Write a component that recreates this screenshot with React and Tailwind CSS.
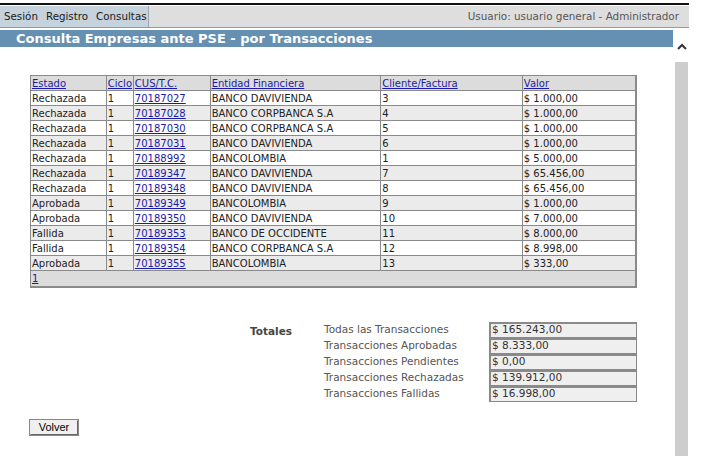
import React from "react";

const rows = [
  ["Rechazada", "1", "70187027", "BANCO DAVIVIENDA", "3", "$ 1.000,00"],
  ["Rechazada", "1", "70187028", "BANCO CORPBANCA S.A", "4", "$ 1.000,00"],
  ["Rechazada", "1", "70187030", "BANCO CORPBANCA S.A", "5", "$ 1.000,00"],
  ["Rechazada", "1", "70187031", "BANCO DAVIVIENDA", "6", "$ 1.000,00"],
  ["Rechazada", "1", "70188992", "BANCOLOMBIA", "1", "$ 5.000,00"],
  ["Rechazada", "1", "70189347", "BANCO DAVIVIENDA", "7", "$ 65.456,00"],
  ["Rechazada", "1", "70189348", "BANCO DAVIVIENDA", "8", "$ 65.456,00"],
  ["Aprobada", "1", "70189349", "BANCOLOMBIA", "9", "$ 1.000,00"],
  ["Aprobada", "1", "70189350", "BANCO DAVIVIENDA", "10", "$ 7.000,00"],
  ["Fallida", "1", "70189353", "BANCO DE OCCIDENTE", "11", "$ 8.000,00"],
  ["Fallida", "1", "70189354", "BANCO CORPBANCA S.A", "12", "$ 8.998,00"],
  ["Aprobada", "1", "70189355", "BANCOLOMBIA", "13", "$ 333,00"],
];

const totals = [
  ["Todas las Transacciones", "$ 165.243,00"],
  ["Transacciones Aprobadas", "$ 8.333,00"],
  ["Transacciones Pendientes", "$ 0,00"],
  ["Transacciones Rechazadas", "$ 139.912,00"],
  ["Transacciones Fallidas", "$ 16.998,00"],
];

const headers = [
  ["Estado", "w-[76px]"],
  ["Ciclo", "w-[27px]"],
  ["CUS/T.C.", "w-[77px]"],
  ["Entidad Financiera", "w-[171px]"],
  ["Cliente/Factura", "w-[142px]"],
  ["Valor", "w-[114px]"],
];

export default function App() {
  return (
    <div className="relative w-[721px] h-[456px] bg-white overflow-hidden flex flex-col font-['DejaVu_Sans',sans-serif] text-[10px] text-[#222]">
      <div className="w-[689px] pt-[3px]">
        <div className="h-[2px] bg-[#111]" />
        <div className="h-[1px] bg-white" />
        <div className="flex h-[22px] bg-[#dedede] border-b border-[#9a9a9a]">
          <div className="flex items-center gap-[8px] pl-[4px] w-[149px] bg-[#c6d3dc] border-r border-[#9aa8b2] text-[10.3px] text-[#1a1a1a]">
            <span>Sesión</span>
            <span>Registro</span>
            <span>Consultas</span>
          </div>
          <div className="flex-1 flex items-center justify-end pr-[10px] text-[10.4px] text-[#555]">
            Usuario: usuario general - Administrador
          </div>
        </div>
      </div>
      <div className="flex flex-1">
        <div className="w-[674px]">
          <div className="mt-[2px] mr-[1px] h-[17px] bg-[#6590b1] flex items-center pl-[16px] text-white font-bold text-[13px] leading-none">
            Consulta Empresas ante PSE - por Transacciones
          </div>
          <div className="pl-[30px] pt-[28px]">
            <table className="border-collapse w-[607px] border-r-2 border-b-2 border-[#8a8a8a]">
              <thead>
                <tr className="bg-[#dcdcdc] h-[15px]">
                  {headers.map(([h, w]) => (
                    <th key={h} className={`${w} border border-[#8a8a8a] p-0 pl-[1px] text-left font-normal leading-[13px]`}>
                      <span className="text-[#1a1aaa] underline">{h}</span>
                    </th>
                  ))}
                </tr>
              </thead>
              <tbody>
                {rows.map((r, i) => (
                  <tr key={i} className={`h-[15px] ${i % 2 === 0 ? "bg-white" : "bg-[#ebebeb]"}`}>
                    {r.map((c, j) => (
                      <td key={j} className="border border-[#8a8a8a] p-0 pl-[1px] leading-[13px] whitespace-nowrap">
                        {j === 2 ? <span className="text-[#1a1aaa] underline">{c}</span> : c}
                      </td>
                    ))}
                  </tr>
                ))}
                <tr className="h-[16px] bg-[#dcdcdc]">
                  <td colSpan={6} className="border border-[#8a8a8a] p-0 pl-[1px] leading-[13px]">
                    <span className="text-[#1a1aaa] underline">1</span>
                  </td>
                </tr>
              </tbody>
            </table>
            <div className="flex mt-[34px] text-[10.5px]">
              <div className="w-[294px] pl-[220px] pt-[2px] font-bold text-[#444] whitespace-nowrap">Totales</div>
              <div className="flex flex-col">
                {totals.map(([l, v]) => (
                  <div key={l} className="flex h-[16px] items-stretch">
                    <div className="w-[165px] flex items-center text-[#555] whitespace-nowrap">{l}</div>
                    <div className="w-[148px] border-t-2 border-l-2 border-b border-r border-[#8a8a8a] bg-[#efefef] flex items-center pl-[1px] text-[#333]">
                      {v}
                    </div>
                  </div>
                ))}
              </div>
            </div>
            <div className="mt-[18px]">
              <button className="h-[15px] w-[48px] bg-[#f0f0f0] border border-t-[#eee] border-l-[#eee] border-r-[#666] border-b-[#666] outline outline-1 outline-[#888] text-[11px] leading-none text-black font-['Liberation_Sans',sans-serif]">
                Volver
              </button>
            </div>
          </div>
        </div>
        <div className="w-[15px] flex flex-col">
          <div className="h-[34px] flex items-start justify-center pt-[15px]">
            <svg width="10" height="7" viewBox="0 0 10 7">
              <path d="M1 6 L5 2 L9 6" fill="none" stroke="#333" strokeWidth="2" />
            </svg>
          </div>
          <div className="flex-1 mx-[1px] bg-[#cdcdcd]" />
        </div>
      </div>
    </div>
  );
}
